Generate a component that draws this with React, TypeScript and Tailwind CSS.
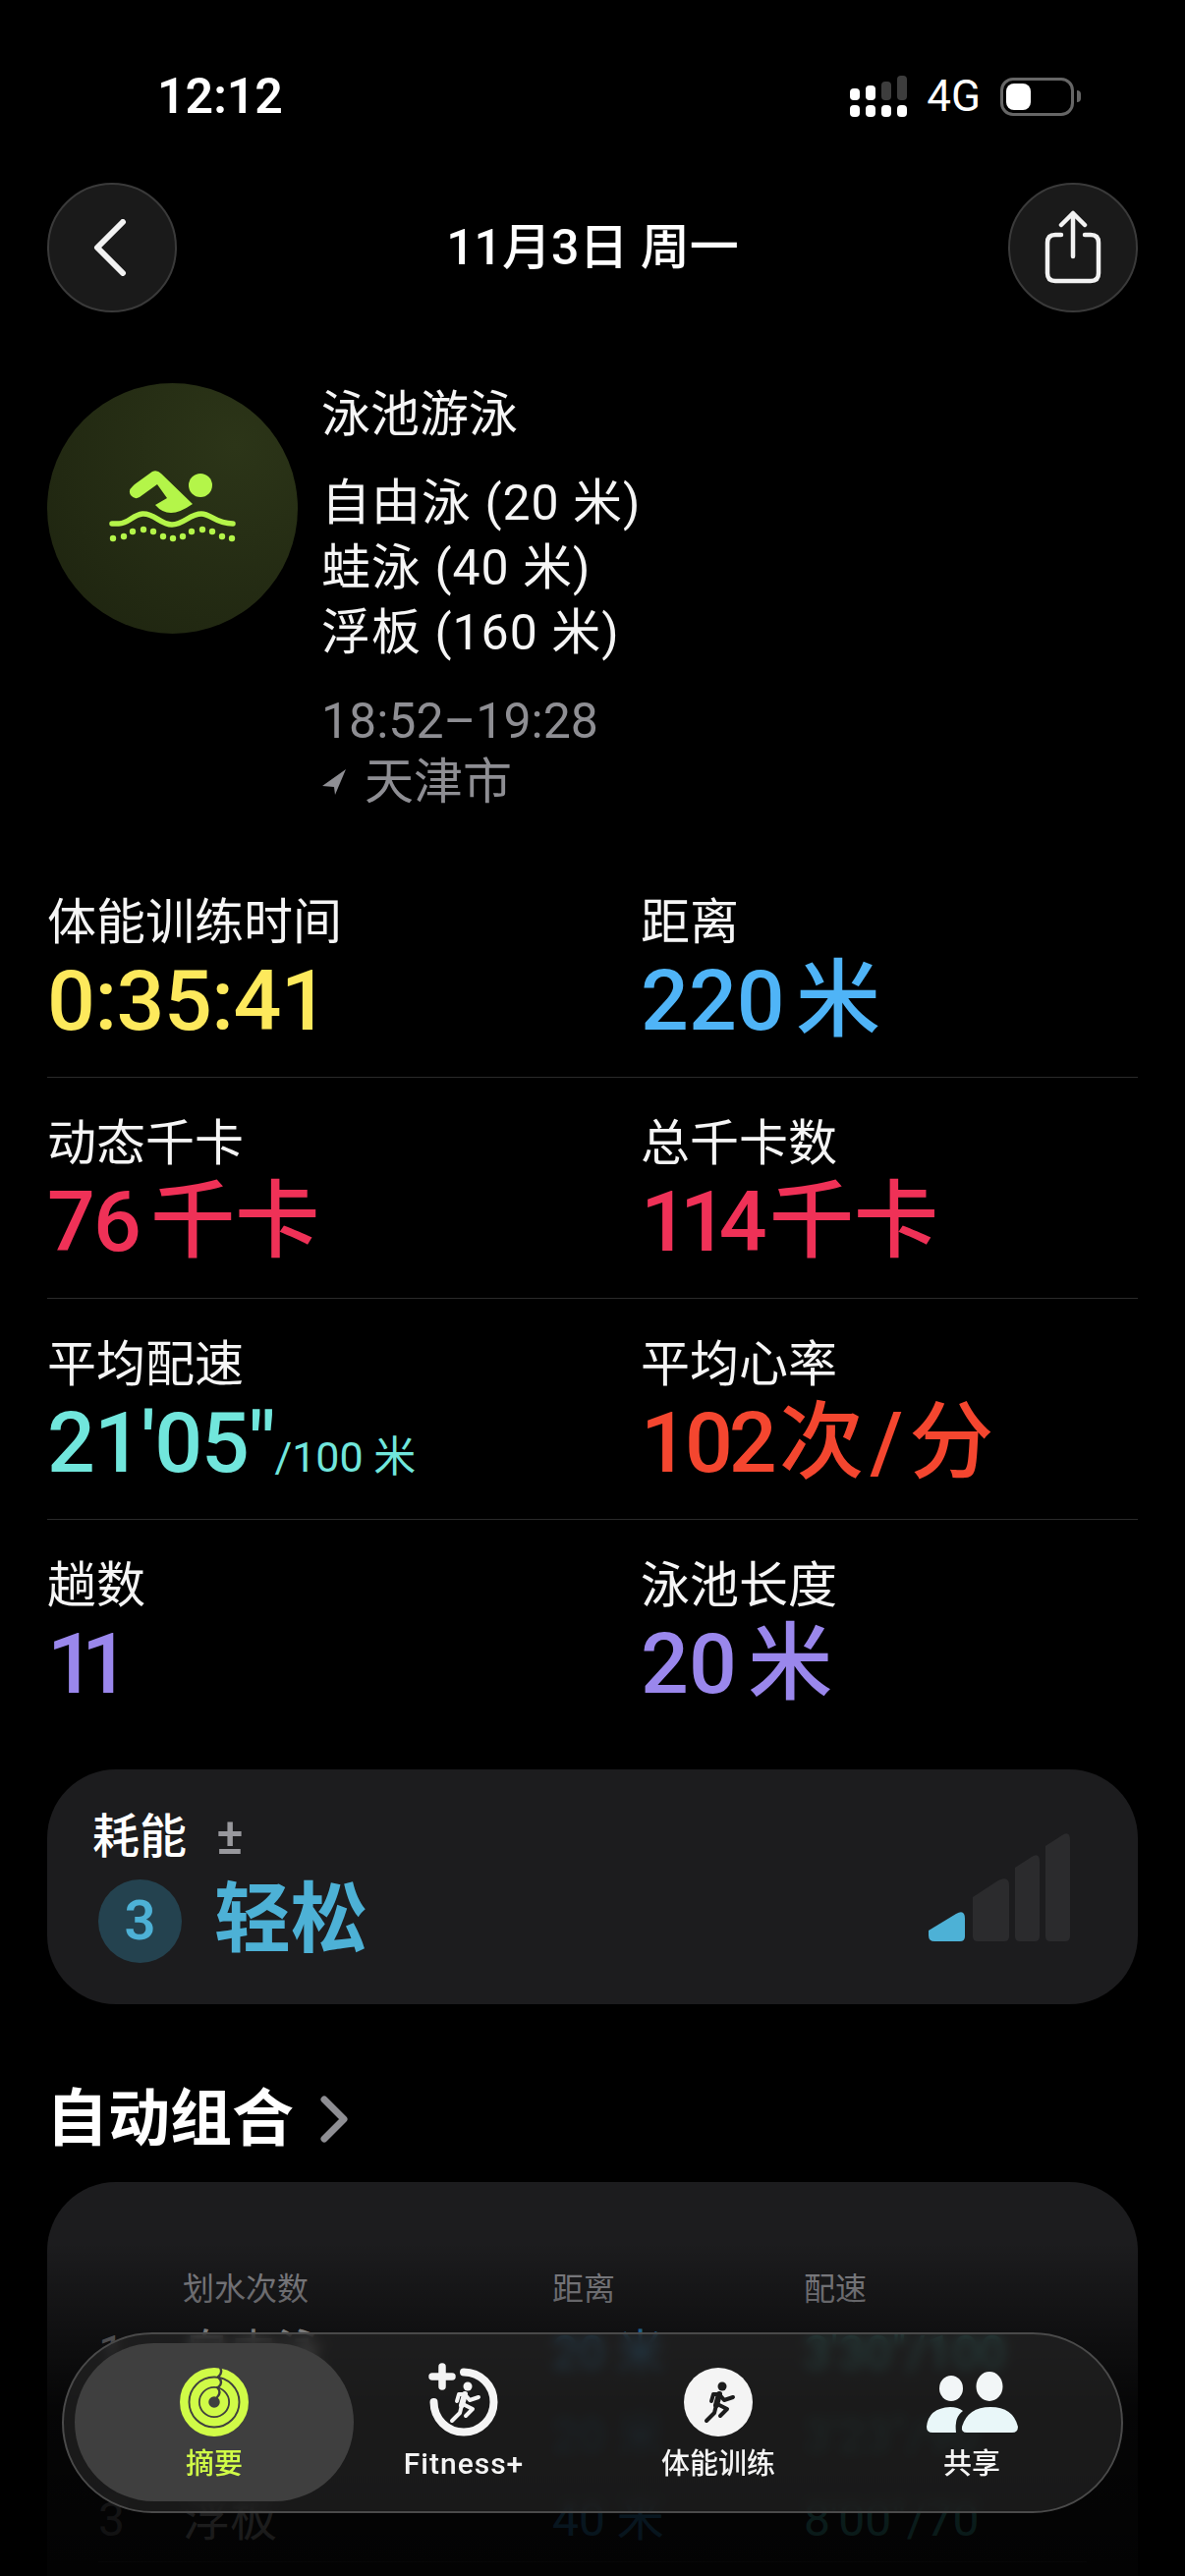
const cjk = "font-['Roboto','Noto_Sans_CJK_SC',sans-serif]"

const metrics = [
  [
    { label: '体能训练时间', num: '0:35:41', tail: '', fit: 'tracking-[-0.5px]', color: 'text-[#fde95c]' },
    { label: '距离', num: '220', tail: ' 米', fit: '', color: 'text-[#4fb4f7]' },
  ],
  [
    { label: '动态千卡', num: '76', tail: ' 千卡', fit: 'tracking-[-2px]', color: 'text-[#ef3157]' },
    { label: '总千卡数', num: '114', tail: ' 千卡', fit: 'tracking-[-9px]', color: 'text-[#ef3157]' },
  ],
  [
    { label: '平均配速', num: `21'05"`, tail: '', unit: '/100 米', fit: 'tracking-[-1px]', color: 'text-[#71e6dc]' },
    { label: '平均心率', num: '102', tail: ' 次 / 分', fit: 'tracking-[-4px]', spacing: '[word-spacing:-15px]', color: 'text-[#f4462f]' },
  ],
  [
    { label: '趟数', num: '11', tail: '', fit: 'tracking-[-14px]', color: 'text-[#9a87ec]' },
    { label: '泳池长度', num: '20', tail: ' 米', fit: '', color: 'text-[#9a87ec]' },
  ],
]

const sets = [
  { n: '1', name: '自由泳', dist: '20 米', pace: `3'30"/100` },
  { n: '2', name: '蛙泳', dist: '20 米', pace: `3'23"/90` },
  { n: '3', name: '浮板', dist: '40 米', pace: `8'00"/70` },
]

function SignalIcon() {
  return (
    <svg width="58" height="42" viewBox="0 0 58 42">
      <rect x="0" y="13" width="10" height="12" rx="4" fill="#fff" />
      <rect x="16" y="10" width="10" height="15" rx="4" fill="#fff" />
      <rect x="32" y="6" width="10" height="19" rx="4" fill="#3d3d3d" />
      <rect x="48" y="0" width="10" height="25" rx="4" fill="#3d3d3d" />
      <rect x="0" y="30" width="10" height="12" rx="4" fill="#fff" />
      <rect x="16" y="30" width="10" height="12" rx="4" fill="#fff" />
      <rect x="32" y="30" width="10" height="12" rx="4" fill="#fff" />
      <rect x="48" y="30" width="10" height="12" rx="4" fill="#fff" />
    </svg>
  )
}

function SwimIcon() {
  return (
    <svg width="129" height="73" viewBox="0 0 129 73" fill="#b4f549" className="mb-[5px]">
      <circle cx="93" cy="15" r="12" />
      <path d="M26 14 L44 1 Q49 -1 53 3 L85 34 Q72 43 63 43 Q54 43 47 35 L59 28 L49 14 L31 27 Q26 30 22 25 Q19 20 24 16 Z" />
      <path
        d="M3 54 H10 C20 54 24 45 34 44 C46 43 52 55 64 55 C76 55 82 44 94 44 C104 44 108 54 126 54"
        fill="none"
        stroke="#b4f549"
        strokeWidth="5.5"
        strokeLinecap="round"
      />
      {[
        [4, 69], [15, 67], [24, 62], [35, 60], [45, 62], [55, 67], [65, 69],
        [75, 67], [84, 62], [95, 60], [105, 62], [115, 67], [125, 69],
      ].map(([x, y]) => (
        <circle key={x} cx={x} cy={y} r="3.2" />
      ))}
    </svg>
  )
}

// drawn in the 70px box of the tab icons
function Runner({ color }: { color: string }) {
  return (
    <g fill="none" stroke={color} strokeWidth="4" strokeLinecap="round" strokeLinejoin="round">
      <circle cx="39" cy="19" r="4.500" fill={color} stroke="none" />
      <path d="M33 38 L36 27" strokeWidth="6" />
      <path d="M36 27 L30 27 L28 34" />
      <path d="M36 27 L41 33 L50 30" />
      <path d="M34 37 L44 42 L37 49" />
      <path d="M33 38 L31 46 L23 54" />
    </g>
  )
}

function RingsIcon() {
  return (
    <svg width="70" height="70" viewBox="0 0 70 70" fill="none" stroke="#d0fb47" strokeWidth="8.5">
      <circle cx="35" cy="35" r="30.7" />
      <circle cx="35" cy="35" r="20.3" />
      <circle cx="35" cy="35" r="10" />
      <g stroke="#3f3f3f" strokeWidth="2.4" strokeLinecap="round">
        <path d="M41 0 Q44 5 39 9.500" />
        <path d="M39 9.500 Q45 15 39 20" />
        <path d="M38 20 Q43 25 38 30" />
      </g>
    </svg>
  )
}

function FitnessIcon() {
  return (
    <svg width="70" height="70" viewBox="0 0 70 70" fill="none" stroke="#f4f4f4" className="overflow-visible">
      <path d="M35 4.500 A30.500 30.500 0 1 1 4.500 35" strokeWidth="8" strokeLinecap="round" />
      <path d="M13 -1 V19 M3 9 H23" strokeWidth="7.5" strokeLinecap="round" />
      <Runner color="#f4f4f4" />
    </svg>
  )
}

function WorkoutIcon() {
  return (
    <svg width="70" height="70" viewBox="0 0 70 70">
      <circle cx="35" cy="35" r="35" fill="#f4f4f4" />
      <Runner color="#1c1c1c" />
    </svg>
  )
}

function ShareIcon() {
  return (
    <svg width="93" height="62" viewBox="0 0 93 62" fill="#f2f6f7" className="my-[4px]">
      <ellipse cx="25" cy="17" rx="12" ry="13" />
      <ellipse cx="64" cy="15" rx="13.500" ry="15" />
      <path d="M0 56 Q2 37 24 36 Q32 36 37 40 Q28 46 30 62 H6 Q0 62 0 56 Z" fill="#e9f7f9" />
      <path d="M41 62 Q35 62 36 56 Q42 36 65 36 Q88 36 93 56 Q93 62 87 62 Z" fill="#e9f7f9" />
    </svg>
  )
}

export default function App() {
  return (
    <div className={`relative w-[1206px] h-[2622px] overflow-hidden bg-black text-white ${cjk}`}>
      {/* status bar */}
      <div className="pt-[74px] pl-[160px] pr-[106px] h-[122px] flex justify-between items-center">
        <span className="text-[50px] leading-[50px] font-semibold">12:12</span>
        <div className="flex items-center gap-[20px]">
          <SignalIcon />
          <span className="text-[44px] leading-[50px] font-normal">4G</span>
          <div className="flex items-center gap-[3px]">
            <div className="w-[75px] h-[39px] rounded-[13px] border-[3px] border-[#666] p-[3px]">
              <div className="w-[25px] h-full rounded-[8px] bg-white" />
            </div>
            <div className="w-[4px] h-[12px] rounded-r-full bg-[#666]" />
          </div>
        </div>
      </div>

      {/* nav */}
      <div className="mt-[64px] px-12 flex items-center justify-between">
        <button className="w-[132px] h-[132px] rounded-full bg-[#1a1a1a] border-2 border-[#3a3a3a] flex items-center justify-center">
          <svg width="36" height="58" viewBox="0 0 36 58" fill="none" stroke="#f2f2f2" strokeWidth="6" strokeLinecap="round" strokeLinejoin="round" className="mr-[4px]">
            <path d="M31 3 L5 29 L31 55" />
          </svg>
        </button>
        <h1 className="text-[50px] leading-[60px] font-medium">11月3日 周一</h1>
        <button className="w-[132px] h-[132px] rounded-full bg-[#1a1a1a] border-2 border-[#3a3a3a] flex items-center justify-center">
          <svg width="58" height="76" viewBox="0 0 58 76" fill="none" stroke="#f2f2f2" strokeWidth="4.500" strokeLinecap="round" strokeLinejoin="round">
            <path d="M29 3 V47 M17 15 L29 3 L41 15" />
            <path d="M17 25 H11 Q3 25 3 33 V64 Q3 72 11 72 H47 Q55 72 55 64 V33 Q55 25 47 25 H41" />
          </svg>
        </button>
      </div>

      {/* workout summary */}
      <div className="mt-[72px] px-12 flex gap-[24px]">
        <div className="w-[255px] h-[255px] rounded-full bg-[radial-gradient(circle_at_75%_25%,#2c3518,#1d230f)] flex items-center justify-center shrink-0">
          <SwimIcon />
        </div>
        <div className="-mt-[1px] text-[50px]">
          <div className="leading-[66px] text-[#f5f5f5]">泳池游泳</div>
          <div className="mt-[24px] leading-[66px] tracking-[1px] text-[#f5f5f5]">
            <div>自由泳 (20 米)</div>
            <div>蛙泳 (40 米)</div>
            <div>浮板 (160 米)</div>
          </div>
          <div className="mt-[26px] leading-[62px] text-[#8e8e93]">
            <div>18:52–19:28</div>
            <div className="flex items-center gap-[19px]">
              <svg width="24" height="26" viewBox="0 0 24 26" fill="#8e8e93" className="ml-[1px]">
                <path d="M24 0 L0 17 L12 18 L13 26 Z" />
              </svg>
              <span>天津市</span>
            </div>
          </div>
        </div>
      </div>

      {/* metrics */}
      <div className="mt-[45px] mx-12">
        {metrics.map((row, i) => (
          <div key={i} className={`grid grid-cols-[604px_1fr] h-[225px] pt-[37px] ${i < 3 ? 'border-b border-[#2a2a2a]' : ''}`}>
            {row.map((m) => (
              <div key={m.label}>
                <div className="text-[50px] leading-[60px] text-[#f5f5f5]">{m.label}</div>
                <div className={`mt-[5px] text-[86px] leading-[90px] font-medium ${m.spacing ?? '[word-spacing:-10px]'} ${m.color}`}>
                  <span className={m.fit}>{m.num}</span>
                  {m.tail}
                  {m.unit && <span className="text-[43px] font-normal [word-spacing:0px]">{m.unit}</span>}
                </div>
              </div>
            ))}
          </div>
        ))}
      </div>

      {/* effort card */}
      <div className="mt-[29px] mx-12 h-[239px] rounded-[70px] bg-[#1c1c1e] flex justify-between">
        <div className="pl-[46px] pt-[39px]">
          <div className="flex items-center gap-[30px]">
            <span className="text-[48px] leading-[60px] font-medium">耗能</span>
            <span className="text-[52px] leading-[60px] font-medium text-[#98989d]">±</span>
          </div>
          <div className="mt-[10px] ml-[6px] flex items-center gap-[33px]">
            <div className="w-[85px] h-[85px] rounded-full bg-[#24424f] text-[#4db1d6] text-[56px] font-semibold flex items-center justify-center">3</div>
            <span className="text-[78px] leading-[90px] font-semibold text-[#4db1d6]">轻松</span>
          </div>
        </div>
        <svg width="146" height="112" viewBox="0 0 146 112" className="mt-[64px] mr-[68px]">
          <path d="M1 100 L29 83 Q38 78 38 88 V106 Q38 111 33 111 H7 Q1 111 1 105 Z" fill="#4db1d6" />
          <path d="M46 66 L72 49 Q83 44 83 54 V106 Q83 111 78 111 H51 Q46 111 46 106 Z" fill="#2b2b2d" />
          <path d="M89 36 L106 25 Q114 20 114 30 V106 Q114 111 109 111 H94 Q89 111 89 106 Z" fill="#2b2b2d" />
          <path d="M120 14 L137 3 Q145 -2 145 8 V106 Q145 111 140 111 H125 Q120 111 120 106 Z" fill="#2b2b2d" />
        </svg>
      </div>

      {/* auto sets */}
      <div className="mt-[77px] ml-[47px] flex items-center gap-[26px]">
        <h2 className="text-[63px] leading-[80px] font-bold">自动组合</h2>
        <svg width="30" height="48" viewBox="0 0 30 48" fill="none" stroke="#8e8e93" strokeWidth="7" strokeLinecap="round" strokeLinejoin="round">
          <path d="M5 4 L25 24 L5 44" />
        </svg>
      </div>

      <div className="mt-[24px] mx-12 h-[500px] rounded-[70px] bg-[#1c1c1e] pl-[52px] pr-[52px] pt-[89px]">
        <div className="grid grid-cols-[86px_376px_256px_1fr] text-[32px] leading-[40px] text-[#8e8e93]">
          <span />
          <span>划水次数</span>
          <span>距离</span>
          <span>配速</span>
        </div>
        <div className="mt-[2px] border-b border-[#444]">
          {sets.map((s) => (
            <div key={s.n} className="grid grid-cols-[86px_376px_256px_1fr] h-[85px] items-center text-[48px]">
              <span className="text-[#8e8e93]">{s.n}</span>
              <span className="text-[#d8d8d8]">{s.name}</span>
              <span className="text-[#3aa4e8]">{s.dist}</span>
              <span className="text-[#4ed0c8]">{s.pace}</span>
            </div>
          ))}
        </div>
      </div>

      {/* bottom fade */}
      <div className="absolute left-0 right-0 bottom-0 h-[340px] bg-gradient-to-b from-transparent via-black/80 to-black/90 pointer-events-none" />

      {/* tab bar */}
      <div className="absolute left-[63px] top-[2374px] w-[1080px] h-[184px] rounded-full border-2 border-[#4a4a4a] bg-[#282828]/60 backdrop-blur-[6px] flex items-start pl-[11px] pt-[34px]">
        <div className="absolute left-[11px] top-[9px] w-[284px] h-[161px] rounded-full bg-[#3f3f3f]" />
        <div className="relative w-[284px] flex flex-col items-center">
          <RingsIcon />
          <span className="mt-[8px] text-[29px] leading-[40px] font-medium text-[#d0fb47]">摘要</span>
        </div>
        <div className="relative w-[224px] flex flex-col items-center">
          <FitnessIcon />
          <span className="mt-[8px] text-[30px] leading-[40px] font-medium tracking-[1px] text-[#f4f4f4]">Fitness+</span>
        </div>
        <div className="relative w-[294px] flex flex-col items-center">
          <WorkoutIcon />
          <span className="mt-[8px] text-[29px] leading-[40px] font-medium text-[#f4f4f4]">体能训练</span>
        </div>
        <div className="relative w-[222px] flex flex-col items-center">
          <ShareIcon />
          <span className="mt-[8px] text-[29px] leading-[40px] font-medium text-[#f4f4f4]">共享</span>
        </div>
      </div>
    </div>
  )
}
